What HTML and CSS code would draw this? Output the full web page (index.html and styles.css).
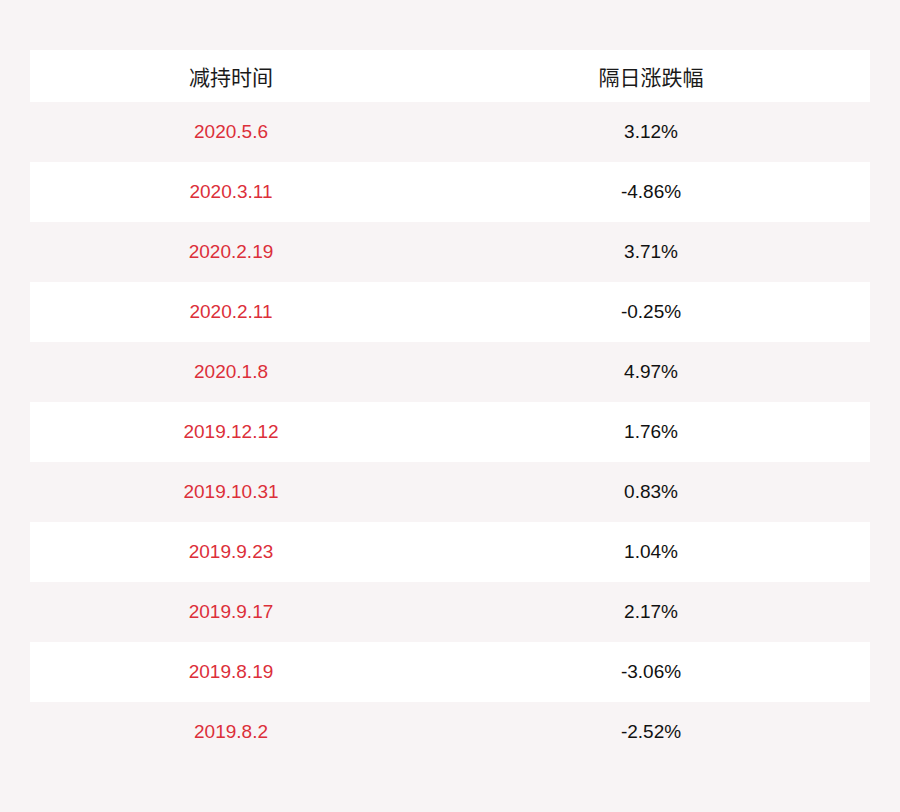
FILE: index.html
```html
<!DOCTYPE html>
<html lang="zh">
<head>
<meta charset="utf-8">
<link rel="stylesheet" href="styles.css">
</head>
<body>
<div class="page">
  <div class="table">
    <div class="row head"><div class="cell">减持时间</div><div class="cell">隔日涨跌幅</div></div>
    <div class="row"><div class="cell date">2020.5.6</div><div class="cell">3.12%</div></div>
    <div class="row alt"><div class="cell date">2020.3.11</div><div class="cell">-4.86%</div></div>
    <div class="row"><div class="cell date">2020.2.19</div><div class="cell">3.71%</div></div>
    <div class="row alt"><div class="cell date">2020.2.11</div><div class="cell">-0.25%</div></div>
    <div class="row"><div class="cell date">2020.1.8</div><div class="cell">4.97%</div></div>
    <div class="row alt"><div class="cell date">2019.12.12</div><div class="cell">1.76%</div></div>
    <div class="row"><div class="cell date">2019.10.31</div><div class="cell">0.83%</div></div>
    <div class="row alt"><div class="cell date">2019.9.23</div><div class="cell">1.04%</div></div>
    <div class="row"><div class="cell date">2019.9.17</div><div class="cell">2.17%</div></div>
    <div class="row alt"><div class="cell date">2019.8.19</div><div class="cell">-3.06%</div></div>
    <div class="row"><div class="cell date">2019.8.2</div><div class="cell">-2.52%</div></div>
  </div>
</div>
</body>
</html>
```
FILE: styles.css
```css
html, body {
  margin: 0;
  padding: 0;
  background: #f8f4f5;
}
.page {
  width: 900px;
  height: 812px;
  padding: 50px 30px 0;
  box-sizing: border-box;
  font-family: "Liberation Sans", Arial, "Noto Sans CJK SC", sans-serif;
}
.table {
  display: flex;
  flex-direction: column;
}
.row {
  display: grid;
  grid-template-columns: 420px 420px;
  height: 60px;
  align-items: center;
  font-size: 19px;
  color: #111;
}
.row.alt, .row.head {
  background: #ffffff;
}
.row.head {
  height: 52px;
  font-family: "Noto Sans CJK SC", sans-serif;
  font-size: 21px;
  color: #1a1a1a;
}
.cell {
  text-align: center;
  padding-right: 18px;
}
.date {
  color: #dc2f3a;
}
```
